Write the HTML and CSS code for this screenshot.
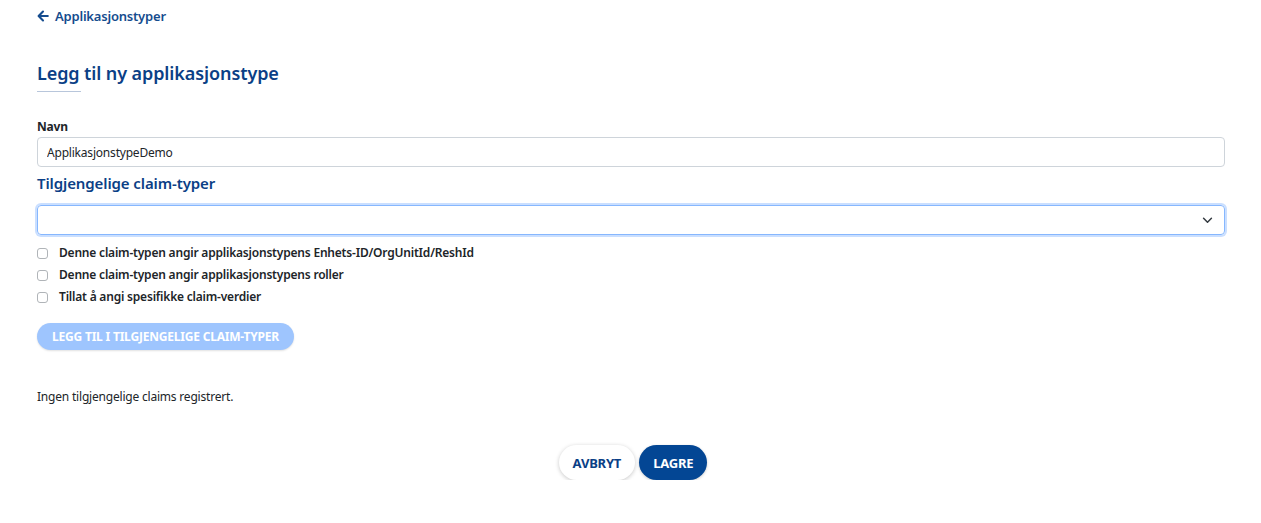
FILE: index.html
```html
<!DOCTYPE html>
<html lang="no">
<head>
<meta charset="utf-8">
<title>Legg til ny applikasjonstype</title>
<link rel="stylesheet" href="styles.css">
</head>
<body>
<main class="page">
  <a class="back" href="#">
    <svg class="back-icon" viewBox="0 0 12 12" width="12" height="12" aria-hidden="true"><path d="M10.8 6H2M6 1.6L1.6 6 6 10.4" fill="none" stroke="currentColor" stroke-width="2.1" stroke-linecap="round" stroke-linejoin="round"/></svg>
    Applikasjonstyper
  </a>
  <h1 class="title">Legg til ny applikasjonstype</h1>
  <div class="title-rule"></div>

  <label class="field-label" for="navn">Navn</label>
  <input id="navn" class="text-input" type="text" value="ApplikasjonstypeDemo">

  <h2 class="section-title">Tilgjengelige claim-typer</h2>
  <div class="select">
    <svg class="chevron" viewBox="0 0 12 8" width="11" height="7" aria-hidden="true"><path d="M1.5 1.5L6 6l4.5-4.5" fill="none" stroke="#343a40" stroke-width="1.7" stroke-linecap="round" stroke-linejoin="round"/></svg>
  </div>

  <div class="checks">
    <label class="check"><span class="box"></span>Denne claim-typen angir applikasjonstypens Enhets-ID/OrgUnitId/ReshId</label>
    <label class="check"><span class="box"></span>Denne claim-typen angir applikasjonstypens roller</label>
    <label class="check"><span class="box"></span>Tillat å angi spesifikke claim-verdier</label>
  </div>

  <div class="add-row">
    <button class="btn btn-disabled" type="button">Legg til i tilgjengelige claim-typer</button>
  </div>

  <p class="empty">Ingen tilgjengelige claims registrert.</p>

  <div class="actions">
    <button class="btn btn-light" type="button">Avbryt</button>
    <button class="btn btn-primary" type="button">Lagre</button>
  </div>
</main>
</body>
</html>
```

FILE: styles.css
```css
* { box-sizing: border-box; }
html, body { margin: 0; padding: 0; background: #fff; }
body {
  font-family: "Noto Sans", "Open Sans", "Liberation Sans", sans-serif;
  color: #212529;
  font-size: 12px;
}
.page {
  padding: 6px 36px 0 37px;
  display: flex;
  flex-direction: column;
}
.back {
  display: flex;
  align-items: center;
  gap: 6px;
  color: #154c8e;
  text-decoration: none;
  font-size: 13px;
  font-weight: 600;
  height: 20px;
  letter-spacing: -0.2px;
}
.back-icon { flex: none; }
.title {
  margin: 35px 0 0;
  font-size: 18px;
  font-weight: 600;
  color: #0b3f86;
  line-height: 24px;
  letter-spacing: -0.1px;
}
.title-rule {
  width: 44px;
  height: 1px;
  background: #b8c6db;
  margin-top: 6px;
}
.field-label {
  margin-top: 27px;
  font-weight: 700;
  font-size: 12px;
  line-height: 16px;
  color: #212529;
  letter-spacing: -0.2px;
}
.text-input {
  margin-top: 2px;
  height: 30px;
  border: 1px solid #ced4da;
  border-radius: 4px;
  padding: 0 9px;
  font: inherit;
  font-size: 12px;
  color: #212529;
  letter-spacing: -0.2px;
  outline: none;
}
.section-title {
  margin: 6px 0 0;
  font-size: 15px;
  font-weight: 600;
  color: #0b3f86;
  line-height: 20px;
  letter-spacing: -0.1px;
}
.select {
  margin-top: 12px;
  height: 30px;
  border: 1px solid #86b7fe;
  border-radius: 4px;
  box-shadow: 0 0 0 2px rgba(13, 110, 253, 0.22);
  display: flex;
  align-items: center;
  justify-content: flex-end;
  padding-right: 11px;
}
.checks {
  margin-top: 10px;
  display: flex;
  flex-direction: column;
  gap: 6px;
}
.check {
  display: flex;
  align-items: center;
  gap: 11px;
  font-weight: 600;
  font-size: 12px;
  line-height: 16px;
  letter-spacing: -0.2px;
  color: #212529;
}
.box {
  width: 11px;
  height: 11px;
  border: 1px solid #b0b4b8;
  border-radius: 3px;
  flex: none;
}
.add-row { margin-top: 18px; display: flex; }
.btn {
  font-family: inherit;
  border: none;
  border-radius: 999px;
  text-transform: uppercase;
  font-weight: 700;
  cursor: pointer;
  letter-spacing: -0.2px;
}
.btn-disabled {
  height: 27px;
  padding: 0 15px;
  background: #9ec5fe;
  color: #fff;
  font-size: 12px;
  box-shadow: 0 1px 2px rgba(0,0,0,0.12);
}
.empty {
  margin: 39px 0 0;
  font-size: 12px;
  line-height: 16px;
  letter-spacing: -0.2px;
}
.actions {
  margin-top: 40px;
  display: flex;
  justify-content: center;
  gap: 4px;
  padding-left: 4px;
}
.btn-light {
  height: 35px;
  padding: 0 14px;
  background: #fff;
  color: #0b3f86;
  font-size: 13px;
  box-shadow: 0 1px 4px rgba(0,0,0,0.22);
}
.btn-primary {
  height: 35px;
  padding: 0 14px;
  background: #034694;
  color: #fff;
  font-size: 13px;
  box-shadow: 0 1px 3px rgba(0,0,0,0.2);
}
```
